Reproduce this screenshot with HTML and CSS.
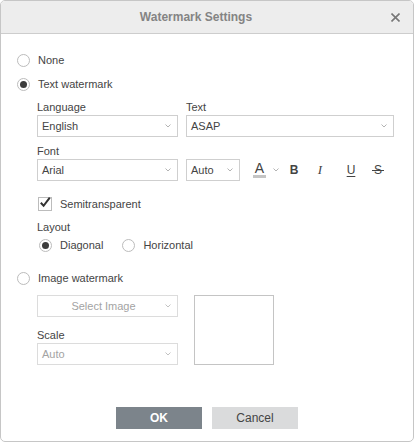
FILE: index.html
```html
<!DOCTYPE html>
<html>
<head>
<meta charset="utf-8">
<link rel="stylesheet" href="styles.css">
</head>
<body>
<div class="dialog">
  <div class="header">
    <span class="title">Watermark Settings</span>
    <span class="close"><svg width="9" height="9" viewBox="0 0 9 9"><path d="M0.5 0.5L8.5 8.5M8.5 0.5L0.5 8.5" stroke="#777" stroke-width="1.6"/></svg></span>
  </div>
  <div class="body">
    <div class="opt"><span class="radio"></span><span>None</span></div>
    <div class="opt"><span class="radio checked"></span><span>Text watermark</span></div>
    <div class="section">
      <div class="row2">
        <div class="field">
          <div class="label">Language</div>
          <div class="select"><span>English</span><svg class="chev" width="6" height="4" viewBox="0 0 6 4"><path d="M0.5 0.5L3 3L5.5 0.5" fill="none" stroke="#aaa" stroke-width="0.9"/></svg></div>
        </div>
        <div class="field">
          <div class="label">Text</div>
          <div class="select"><span>ASAP</span><svg class="chev" width="6" height="4" viewBox="0 0 6 4"><path d="M0.5 0.5L3 3L5.5 0.5" fill="none" stroke="#aaa" stroke-width="0.9"/></svg></div>
        </div>
      </div>
      <div class="row-font">
        <div class="field">
          <div class="label">Font</div>
          <div class="select"><span>Arial</span><svg class="chev" width="6" height="4" viewBox="0 0 6 4"><path d="M0.5 0.5L3 3L5.5 0.5" fill="none" stroke="#aaa" stroke-width="0.9"/></svg></div>
        </div>
        <div class="select size"><span>Auto</span><svg class="chev" width="6" height="4" viewBox="0 0 6 4"><path d="M0.5 0.5L3 3L5.5 0.5" fill="none" stroke="#aaa" stroke-width="0.9"/></svg></div>
        <div class="toolbar">
          <div class="color-btn">
            <span class="color-a"><span class="a-glyph">A</span><span class="a-bar"></span></span>
            <svg class="chev" width="6" height="4" viewBox="0 0 6 4"><path d="M0.5 0.5L3 3L5.5 0.5" fill="none" stroke="#aaa" stroke-width="0.9"/></svg>
          </div>
          <span class="tb tb-b">B</span>
          <span class="tb tb-i">I</span>
          <span class="tb tb-u">U</span>
          <span class="tb tb-s"><span class="s-glyph">S</span></span>
        </div>
      </div>
      <div class="check-row">
        <span class="checkbox"><svg width="14" height="14" viewBox="0 0 14 14"><path d="M2.8 6.8L5.6 9.8L11.8 1.6" fill="none" stroke="#333" stroke-width="2"/></svg></span>
        <span>Semitransparent</span>
      </div>
      <div class="label layout-label">Layout</div>
      <div class="layout-row">
        <div class="opt2"><span class="radio checked"></span><span>Diagonal</span></div>
        <div class="opt2"><span class="radio"></span><span>Horizontal</span></div>
      </div>
    </div>
    <div class="opt img-opt"><span class="radio"></span><span>Image watermark</span></div>
    <div class="image-section">
      <div class="img-col">
        <div class="select disabled center"><span>Select Image</span><svg class="chev" width="6" height="4" viewBox="0 0 6 4"><path d="M0.5 0.5L3 3L5.5 0.5" fill="none" stroke="#bbb" stroke-width="0.9"/></svg></div>
        <div class="label scale-label">Scale</div>
        <div class="select disabled"><span>Auto</span><svg class="chev" width="6" height="4" viewBox="0 0 6 4"><path d="M0.5 0.5L3 3L5.5 0.5" fill="none" stroke="#bbb" stroke-width="0.9"/></svg></div>
      </div>
      <div class="preview"></div>
    </div>
  </div>
  <div class="footer">
    <button class="btn btn-ok">OK</button>
    <button class="btn btn-cancel">Cancel</button>
  </div>
</div>
</body>
</html>
```
FILE: styles.css
```css
body {
  margin: 0;
  font-family: "Liberation Sans", Arial, sans-serif;
  font-size: 11px;
  color: #444;
  background: #fff;
}
.dialog {
  width: 414px;
  height: 442px;
  box-sizing: border-box;
  border: 1px solid #c6c6c6;
  border-radius: 5px;
  display: flex;
  flex-direction: column;
  overflow: hidden;
  background: #fff;
}
.header {
  flex: none;
  height: 32px;
  background: #ededed;
  border-bottom: 1px solid #cdcdcd;
  display: grid;
  grid-template-columns: 1fr 9px;
  align-items: center;
  padding-right: 13px;
}
.title {
  text-align: center;
  font-size: 12px;
  font-weight: bold;
  color: #848484;
}
.close {
  display: flex;
  height: 9px;
}
.body {
  padding: 14px 0 0 16px;
}
.opt {
  display: flex;
  align-items: center;
  gap: 8px;
  height: 24px;
}
.radio {
  width: 13px;
  height: 13px;
  box-sizing: border-box;
  border: 1px solid #bcbcbc;
  border-radius: 50%;
  display: inline-flex;
  align-items: center;
  justify-content: center;
  flex: none;
  background: #fff;
}
.radio.checked::after {
  content: "";
  width: 7px;
  height: 7px;
  border-radius: 50%;
  background: #3c3c3c;
}
.section {
  margin: 4px 0 0 20px;
}
.label {
  height: 15px;
  line-height: 15px;
}
.row2 {
  display: grid;
  grid-template-columns: 141px 208px;
  column-gap: 8px;
}
.select {
  height: 22px;
  box-sizing: border-box;
  border: 1px solid #cfcfcf;
  background: #fff;
  display: flex;
  align-items: center;
  justify-content: space-between;
  padding: 0 6px 0 4px;
}
.row-font {
  display: flex;
  align-items: flex-end;
  margin-top: 7px;
}
.row-font .field {
  width: 141px;
}
.select.size {
  width: 54px;
  margin-left: 8px;
}
.toolbar {
  display: flex;
  align-items: center;
  height: 22px;
  margin-left: 9px;
}
.color-btn {
  width: 33px;
  box-sizing: border-box;
  padding-left: 4px;
  display: flex;
  align-items: center;
  gap: 7px;
}
.color-a {
  display: flex;
  flex-direction: column;
  align-items: center;
  width: 13px;
}
.a-glyph {
  font-size: 14px;
  line-height: 12px;
  height: 12px;
  color: #444;
}
.a-bar {
  width: 13px;
  height: 3px;
  background: #c4c4c4;
  margin-top: 1px;
}
.tb {
  width: 24px;
  text-align: center;
  color: #444;
  line-height: 14px;
}
.tb-b {
  font-weight: bold;
  font-size: 12px;
}
.tb-i {
  margin-left: 2px;
  font-family: "Liberation Serif", "Times New Roman", serif;
  font-style: italic;
  font-size: 13px;
}
.tb-u {
  margin-left: 7px;
  font-size: 12px;
  text-decoration: underline;
  text-underline-offset: 2px;
}
.tb-s {
  margin-left: 3px;
  font-size: 12px;
}
.s-glyph {
  position: relative;
  display: inline-block;
}
.s-glyph::after {
  content: "";
  position: absolute;
  left: -2px;
  right: -2px;
  top: 7px;
  height: 1px;
  background: #444;
}
.check-row {
  display: flex;
  align-items: center;
  gap: 8px;
  height: 22px;
  margin-top: 12px;
  padding-left: 1px;
}
.checkbox {
  width: 14px;
  height: 14px;
  box-sizing: border-box;
  border: 1px solid #bcbcbc;
  position: relative;
  flex: none;
}
.checkbox svg {
  position: absolute;
  left: -1px;
  top: -2px;
}
.layout-label {
  margin-top: 5px;
}
.layout-row {
  display: flex;
  align-items: center;
  gap: 19px;
  height: 20px;
  padding-left: 2px;
}
.opt2 {
  display: flex;
  align-items: center;
  gap: 8px;
}
.img-opt {
  margin-top: 11px;
}
.image-section {
  display: flex;
  margin: 5px 0 0 20px;
}
.img-col {
  width: 141px;
}
.select.disabled {
  border-color: #dcdcdc;
  color: #a3a3a3;
}
.select.center span {
  flex: 1;
  text-align: center;
}
.scale-label {
  margin-top: 11px;
}
.preview {
  width: 80px;
  height: 70px;
  box-sizing: border-box;
  border: 1px solid #c4c4c4;
  margin-left: 16px;
}
.footer {
  margin-top: auto;
  display: flex;
  justify-content: center;
  gap: 10px;
  padding-bottom: 12px;
}
.btn {
  width: 86px;
  height: 22px;
  border: none;
  border-radius: 0;
  font-family: "Liberation Sans", Arial, sans-serif;
  font-size: 12px;
  padding: 0;
}
.btn-ok {
  background: #7c848b;
  color: #fff;
  font-weight: bold;
}
.btn-cancel {
  background: #dadbdc;
  color: #444;
}
```
